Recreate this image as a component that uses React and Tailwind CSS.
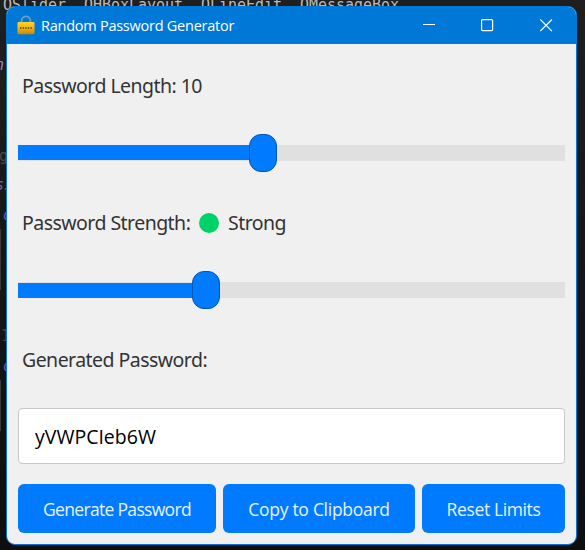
function Lock() {
  return (
    <svg width="18" height="20" viewBox="0 0 18 20" className="-mt-[2px] shrink-0">
      <defs>
        <linearGradient id="body" x1="0" y1="0" x2="0" y2="1">
          <stop offset="0" stopColor="#ffd42c" />
          <stop offset="0.5" stopColor="#f0b414" />
          <stop offset="1" stopColor="#c98700" />
        </linearGradient>
      </defs>
      <path d="M4.6 8V5.8a4.4 4.4 0 0 1 8.8 0V8" fill="none" stroke="#6fa3c4" strokeWidth="1.7" />
      <rect x="0.5" y="7" width="17" height="12.3" rx="1" fill="url(#body)" />
      <path d="M0.5 16.2h17" stroke="#dba000" strokeWidth="0.8" />
      <path d="M3 13h12.500" stroke="#5c4310" strokeWidth="1.5" strokeDasharray="1.5 1.1" />
    </svg>
  );
}

function Slider({ fill, fillClass = "" }) {
  return (
    <div className="relative flex h-[38px] items-center">
      <div className={`flex h-4 w-full bg-[#e0e0e0] ${fillClass}`}>
        <div className="h-[15px] bg-[#007bff]" style={{ width: fill }} />
      </div>
      <div
        className="absolute top-0 h-[38px] w-[28px] rounded-[12px] border border-[#0056b3] bg-[#007bff]"
        style={{ left: fill - 14 }}
      />
    </div>
  );
}

function Label({ children }) {
  return (
    <div
      className="flex h-[30px] items-center whitespace-nowrap pl-1 text-[19.5px] tracking-[-0.54px] text-[#333333]"
      style={{ fontFamily: '"Noto Sans", sans-serif' }}
    >
      {children}
    </div>
  );
}

function Button({ className, children }) {
  return (
    <button className={`h-[49px] rounded-[6px] bg-[#007bff] pt-[2px] whitespace-nowrap text-[17.5px] text-[#e8f2ff] ${className}`}>
      {children}
    </button>
  );
}

export default function App() {
  return (
    <div
      className="relative h-[550px] w-[585px] overflow-hidden bg-[#151515] p-[6px] pr-2 font-normal"
      style={{ fontFamily: '"Open Sans", "Noto Sans", sans-serif' }}
    >
      <div
        className="absolute inset-0 bg-linear-to-b from-[#1f1f1f] to-[#0e0e0e] text-[15px] leading-[20px]"
        style={{ fontFamily: '"DejaVu Sans Mono", monospace' }}
      >
        <div className="-mt-[5px] whitespace-pre pl-[3px] tracking-[-0.03px] text-[#bababa]">QSlider, QHBoxLayout, QLineEdit, QMessageBox</div>
        <div className="-ml-[5px] mt-[40px] italic text-[#a779c6]">n</div>
        <div className="-ml-px mt-[71px] text-[#4a4a4a]">g</div>
        <div className="-ml-[5px] mt-[9px] italic text-[#7a61ad]">ss</div>
        <div className="ml-[3px] mt-[10px] italic text-[#6c58ad]">o</div>
        <div className="mt-[4px] h-[61px] w-px bg-[#3a3a3a]" />
        <div className="ml-px mt-[36px] text-[#424250]">1</div>
        <div className="ml-[3px] mt-[10px] italic text-[#6c58ad]">o</div>
        <div className="mt-[4px] h-[51px] w-px bg-[#3a3a3a]" />
      </div>

      <div className="relative flex h-[539px] w-[571px] flex-col overflow-hidden rounded-[9px] border border-[#0078d7] bg-[#f0f0f0]">
        <header className="flex h-[37px] shrink-0 items-center bg-[#0078d7] pl-[10px] text-white">
          <Lock />
          <h1 className="ml-[6px] w-[260px] whitespace-nowrap text-[14.5px] tracking-[-0.25px]">Random Password Generator</h1>
          <div className="ml-auto flex items-center gap-[46px] pr-[23px]">
            <svg width="12" height="13" viewBox="0 0 12 13" stroke="white" fill="none"><path d="M0 5.5h12" /></svg>
            <svg width="13" height="13" viewBox="0 0 13 13" stroke="white" fill="none"><rect x="0.6" y="0.6" width="11" height="11" rx="1" strokeWidth="1.2" /></svg>
            <svg width="13" height="13" viewBox="0 0 13 13" stroke="white" fill="none"><path d="M0.3 0.5l11.6 11.6M11.9 0.5l-11.6 11.6" strokeWidth="1.2" /></svg>
          </div>
        </header>

        <main className="flex flex-col px-[11px] pt-[27px]">
          <Label>Password Length: 10</Label>
          <div className="mt-[33px]"><Slider fill={245} fillClass="items-start" /></div>
          <div className="mt-[36px]">
            <Label>
              <span className="w-[177px]">Password Strength:</span>
              <span className="size-5 rounded-full bg-[#00d26a]" />
              <span className="ml-[9px]">Strong</span>
            </Label>
          </div>
          <div className="mt-[33px]"><Slider fill={188} fillClass="items-end" /></div>
          <div className="mt-[36px]"><Label>Generated Password:</Label></div>
          <div className="mt-[33px] flex h-[56px] items-center rounded-[4px] border border-[#c8c8c8] bg-white pl-[16px] pt-[2px] text-[19.5px] text-black">
            yVWPCIeb6W
          </div>
          <div className="mt-5 flex gap-[7px]">
            <Button className="w-[198px]"><span className="tracking-[-0.68px]">Generate Password</span></Button>
            <Button className="w-[192px]"><span className="tracking-[-0.28px]">Copy to Clipboard</span></Button>
            <Button className="w-[143px]"><span className="tracking-[-0.38px]">Reset Limits</span></Button>
          </div>
        </main>
      </div>
    </div>
  );
}
